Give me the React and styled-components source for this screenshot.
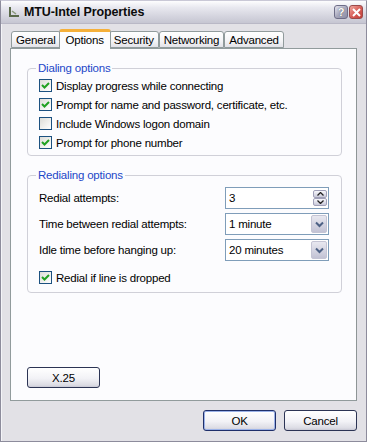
import styled, { createGlobalStyle } from "styled-components";

const GlobalStyle = createGlobalStyle`
  html, body {
    margin: 0;
    padding: 0;
    background: #ffffff;
  }
  * {
    box-sizing: border-box;
  }
`;

export default function App() {
  return (
    <>
      <GlobalStyle />
      <Window>
        <TitleBar>
          <TitleIcon>
            <svg width="14" height="14" viewBox="0 0 14 14">
              <path d="M3 2 L3 11 L12 11" stroke="#5a6a4a" strokeWidth="2" fill="none" />
              <path d="M5 6 L9 9" stroke="#8a9a7a" strokeWidth="1.5" />
            </svg>
          </TitleIcon>
          <TitleText>MTU-Intel Properties</TitleText>
          <CaptionButton>?</CaptionButton>
          <CaptionButton close>
            <svg width="9" height="9" viewBox="0 0 9 9">
              <path d="M1 1 L8 8 M8 1 L1 8" stroke="#fff" strokeWidth="2" />
            </svg>
          </CaptionButton>
        </TitleBar>

        <Client>
          <TabStrip>
            <Tab>General</Tab>
            <Tab active>Options</Tab>
            <Tab>Security</Tab>
            <Tab>Networking</Tab>
            <Tab>Advanced</Tab>
          </TabStrip>

          <Panel>
            <Group>
              <Legend>Dialing options</Legend>
              <CheckRows>
                <CheckRow>
                  <CheckBox checked />
                  <span>Display progress while connecting</span>
                </CheckRow>
                <CheckRow>
                  <CheckBox checked />
                  <span>Prompt for name and password, certificate, etc.</span>
                </CheckRow>
                <CheckRow>
                  <CheckBox />
                  <span>Include Windows logon domain</span>
                </CheckRow>
                <CheckRow>
                  <CheckBox checked />
                  <span>Prompt for phone number</span>
                </CheckRow>
              </CheckRows>
            </Group>

            <Group second>
              <Legend>Redialing options</Legend>
              <FieldGrid>
                <FieldLabel>Redial attempts:</FieldLabel>
                <Field>
                  <FieldValue>3</FieldValue>
                  <Spinner>
                    <SpinButton>
                      <svg width="7" height="4" viewBox="0 0 7 4">
                        <path d="M0.5 3.5 L3.5 0.5 L6.5 3.5" stroke="#222" strokeWidth="1.3" fill="none" />
                      </svg>
                    </SpinButton>
                    <SpinButton>
                      <svg width="7" height="4" viewBox="0 0 7 4">
                        <path d="M0.5 0.5 L3.5 3.5 L6.5 0.5" stroke="#222" strokeWidth="1.3" fill="none" />
                      </svg>
                    </SpinButton>
                  </Spinner>
                </Field>

                <FieldLabel>Time between redial attempts:</FieldLabel>
                <Field>
                  <FieldValue>1 minute</FieldValue>
                  <DropButton>
                    <Chevron />
                  </DropButton>
                </Field>

                <FieldLabel>Idle time before hanging up:</FieldLabel>
                <Field>
                  <FieldValue>20 minutes</FieldValue>
                  <DropButton>
                    <Chevron />
                  </DropButton>
                </Field>
              </FieldGrid>
              <CheckRow standalone>
                <CheckBox checked />
                <span>Redial if line is dropped</span>
              </CheckRow>
            </Group>

            <Spacer />
            <PushButton>X.25</PushButton>
          </Panel>

          <Footer>
            <PushButton primary>OK</PushButton>
            <PushButton>Cancel</PushButton>
          </Footer>
        </Client>
      </Window>
    </>
  );
}

function CheckBox({ checked }) {
  return (
    <Box>
      {checked && (
        <svg width="9" height="9" viewBox="0 0 9 9">
          <path d="M1 4 L3.5 6.5 L8 2" stroke="#21a121" strokeWidth="2" fill="none" />
        </svg>
      )}
    </Box>
  );
}

function Chevron() {
  return (
    <svg width="9" height="7" viewBox="0 0 9 7">
      <path d="M1 1.5 L4.5 5 L8 1.5" stroke="#4d6185" strokeWidth="2" fill="none" />
    </svg>
  );
}

const Window = styled.div`
  width: 367px;
  height: 442px;
  display: flex;
  flex-direction: column;
  background: #e2e1e6;
  border: 1px solid #8d8c9c;
  border-top-color: #c9c8d6;
  font-family: "Liberation Sans", Arial, sans-serif;
  font-size: 11px;
  letter-spacing: -0.2px;
  color: #000;
  overflow: hidden;
`;

const TitleBar = styled.div`
  height: 23px;
  flex: none;
  display: flex;
  align-items: center;
  padding: 0 3px 0 5px;
  background: linear-gradient(#fdfdfe 0%, #e8e8ef 30%, #d4d4de 70%, #c6c6d2 100%);
  border-bottom: 1px solid #b9b8c6;
`;

const TitleIcon = styled.div`
  width: 16px;
  height: 16px;
  display: flex;
  align-items: center;
  justify-content: center;
  margin-right: 2px;
`;

const TitleText = styled.div`
  flex: 1;
  font-weight: bold;
  font-size: 12.5px;
  color: #0c0c0c;
  letter-spacing: -0.1px;
`;

const CaptionButton = styled.div`
  width: 14px;
  height: 14px;
  margin-left: 1px;
  border-radius: 3px;
  display: flex;
  align-items: center;
  justify-content: center;
  font-weight: bold;
  font-size: 11px;
  color: #fff;
  border: 1px solid ${(p) => (p.close ? "#9a4a4a" : "#6e6d88")};
  background: ${(p) =>
    p.close
      ? "linear-gradient(135deg, #f0a8a0 0%, #d8605a 50%, #c03c36 100%)"
      : "linear-gradient(135deg, #e6e6f0 0%, #a8a8bc 50%, #8c8ca4 100%)"};
  text-shadow: 0 0 1px #444;
`;

const Client = styled.div`
  flex: 1;
  display: flex;
  flex-direction: column;
  padding: 4px 9px 10px 7px;
  border-left: 1px solid #f4f4f8;
`;

const TabStrip = styled.div`
  display: flex;
  align-items: flex-end;
  height: 20px;
  padding-left: 2px;
  position: relative;
  z-index: 1;
`;

const Tab = styled.div`
  height: ${(p) => (p.active ? "20px" : "17px")};
  padding: 0 ${(p) => (p.active ? "6px" : "4px")};
  margin: 0 ${(p) => (p.active ? "-2px" : "0")} ${(p) => (p.active ? "-1px" : "0")};
  display: flex;
  align-items: center;
  font-size: 11.5px;
  border: 1px solid #919b9c;
  border-bottom: ${(p) => (p.active ? "none" : "1px solid #919b9c")};
  border-radius: 3px 3px 0 0;
  border-top: ${(p) => (p.active ? "3px solid #f5b03a" : "1px solid #919b9c")};
  background: ${(p) =>
    p.active ? "#fcfcfe" : "linear-gradient(#ffffff 0%, #f4f4f6 60%, #e2e2e8 100%)"};
  padding-bottom: ${(p) => (p.active ? "2px" : "0")};
  position: relative;
  z-index: ${(p) => (p.active ? 2 : 1)};
`;

const Panel = styled.div`
  flex: 1;
  display: flex;
  flex-direction: column;
  margin-left: 1px;
  padding: 13px 14px 12px 16px;
  background: #fcfcfe;
  border: 1px solid #919b9c;
  border-right-color: #8e9596;
`;

const Group = styled.fieldset`
  margin: ${(p) => (p.second ? "13px 0 0" : "0")};
  padding: ${(p) => (p.second ? "6px 10px 8px 11px" : "5px 10px 6px 11px")};
  border: 1px solid #d0d0d8;
  border-radius: 4px;
  min-width: 0;
`;

const Legend = styled.legend`
  padding: 0 2px;
  margin-left: -3px;
  color: #1c47c8;
  font-size: 11.5px;
`;

const CheckRows = styled.div`
  display: flex;
  flex-direction: column;
  gap: 6px;
`;

const CheckRow = styled.label`
  display: flex;
  align-items: center;
  height: 13px;
  font-size: 11.5px;
  margin-top: ${(p) => (p.standalone ? "10px" : "0")};
  & > span {
    margin-left: 4px;
    white-space: nowrap;
  }
`;

const Box = styled.div`
  width: 13px;
  height: 13px;
  flex: none;
  display: flex;
  align-items: center;
  justify-content: center;
  border: 1px solid #1c5180;
  background: linear-gradient(135deg, #dcdcd7 0%, #f2f2ef 60%, #ffffff 100%);
`;

const FieldGrid = styled.div`
  display: grid;
  grid-template-columns: 1fr 104px;
  row-gap: 4px;
  align-items: center;
  padding-right: 2px;
`;

const FieldLabel = styled.div`
  font-size: 11.5px;
`;

const Field = styled.div`
  height: 22px;
  display: flex;
  align-items: stretch;
  border: 1px solid #7f9db9;
  background: #fff;
  padding: 1px;
`;

const FieldValue = styled.div`
  flex: 1;
  display: flex;
  align-items: center;
  padding-left: 2px;
  font-size: 11.5px;
`;

const Spinner = styled.div`
  width: 14px;
  display: flex;
  flex-direction: column;
  justify-content: space-between;
  padding: 1px 0;
`;

const SpinButton = styled.div`
  height: 8px;
  border: 1px solid #a0a0b8;
  border-radius: 2px;
  background: linear-gradient(#f8f8fc, #c8c8d8);
  display: flex;
  align-items: center;
  justify-content: center;
`;

const DropButton = styled.div`
  width: 16px;
  display: flex;
  align-items: center;
  justify-content: center;
  border: 1px solid #c4c4d4;
  border-radius: 2px;
  background: linear-gradient(#e8e8f0, #c2c2d4);
`;

const Spacer = styled.div`
  flex: 1;
`;

const PushButton = styled.div`
  width: 73px;
  height: 21px;
  display: flex;
  align-items: center;
  justify-content: center;
  font-size: 11.5px;
  border: 1px solid ${(p) => (p.primary ? "#1f2f6a" : "#2c3454")};
  border-radius: 3px;
  background: linear-gradient(#ffffff 0%, #f2f2f6 55%, #dcdce4 90%, #c8c8d4 100%);
  box-shadow: ${(p) => (p.primary ? "inset 0 0 0 1px #9bb2e8" : "none")};
`;

const Footer = styled.div`
  display: flex;
  justify-content: flex-end;
  gap: 8px;
  padding-top: 9px;
`;
